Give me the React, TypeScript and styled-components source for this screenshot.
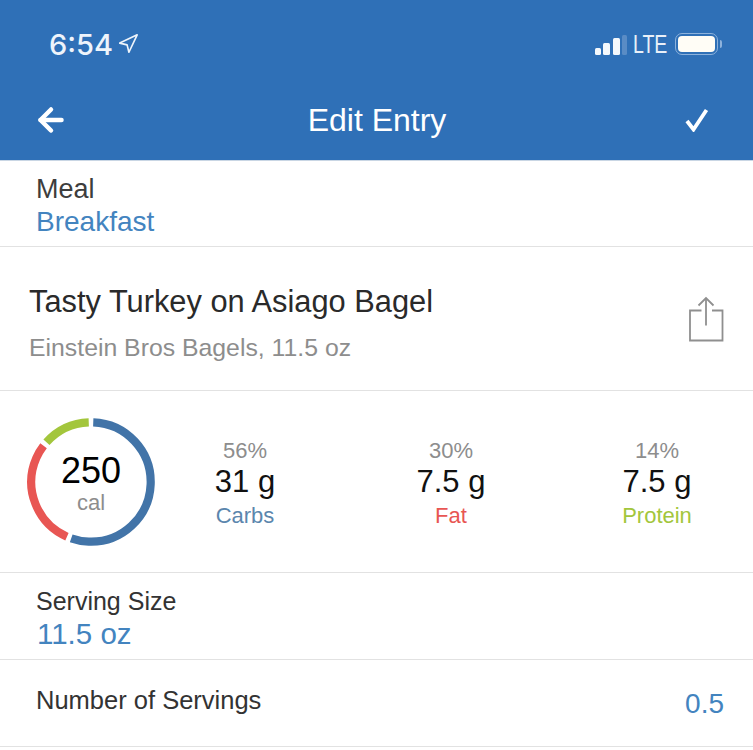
import { createGlobalStyle, styled } from "styled-components";
import { ArrowLeft, Navigation } from "lucide-react";

const GlobalStyle = createGlobalStyle`
  html, body {
    margin: 0;
    padding: 0;
    background: #fff;
    font-family: "Liberation Sans", Arial, sans-serif;
  }
`;

const macros = [
  { name: "Carbs", percent: 56, grams: "31 g", color: "#4274a8", labelColor: "#5b86ad" },
  { name: "Fat", percent: 30, grams: "7.5 g", color: "#e85653", labelColor: "#e85653" },
  { name: "Protein", percent: 14, grams: "7.5 g", color: "#a3c63c", labelColor: "#a3c63c" },
];

function CalorieRing() {
  let start = 0;
  return (
    <RingWrap>
      <svg width="128" height="128" viewBox="0 0 128 128">
        {macros.map((m) => {
          const from = start;
          start += m.percent;
          return (
            <circle
              key={m.name}
              cx="64"
              cy="64"
              r="59.7"
              fill="none"
              stroke={m.color}
              strokeWidth="8.2"
              pathLength={100}
              strokeDasharray={`${m.percent - 1.2} ${100 - m.percent + 1.2}`}
              transform={`rotate(${-90 + (from + 0.6) * 3.6} 64 64)`}
            />
          );
        })}
      </svg>
      <RingText>
        <Calories>250</Calories>
        <CalLabel>cal</CalLabel>
      </RingText>
    </RingWrap>
  );
}

export default function App() {
  return (
    <Page>
      <GlobalStyle />
      <Header>
        <StatusBar>
          <Clock>
            6:54
            <Navigation size={22} strokeWidth={1.8} />
          </Clock>
          <StatusRight>
            <Signal>
              <SignalBar $h={7} $w={6} />
              <SignalBar $h={12} $w={7} />
              <SignalBar $h={17} $w={7} />
              <SignalBar $h={20} $w={5} $dim />
            </Signal>
            <Lte>LTE</Lte>
            <Battery>
              <BatteryFill />
            </Battery>
            <BatteryCap />
          </StatusRight>
        </StatusBar>
        <NavBar>
          <ArrowLeft size={36} strokeWidth={3} />
          <NavTitle>Edit Entry</NavTitle>
          <svg width="24" height="24" viewBox="0 0 24 24" fill="none" stroke="#fff" strokeWidth="3.8">
            <path d="M2 13L8.5 21.5L21.5 2" />
          </svg>
        </NavBar>
      </Header>

      <MealRow>
        <RowLabel>Meal</RowLabel>
        <RowValue>Breakfast</RowValue>
      </MealRow>

      <FoodRow>
        <FoodText>
          <FoodName>Tasty Turkey on Asiago Bagel</FoodName>
          <FoodBrand>Einstein Bros Bagels, 11.5 oz</FoodBrand>
        </FoodText>
        <svg width="36" height="48" viewBox="0 0 36 48" fill="none" stroke="#8f8f8f" strokeWidth="1.8">
          <path d="M13.5 15.5H2V45.5H34.5V15.5H24" />
          <path d="M18 30.5V3" />
          <path d="M10.5 10.5L18 3L25.5 10.5" />
        </svg>
      </FoodRow>

      <MacroRow>
        <CalorieRing />
        <MacroList>
          {macros.map((m) => (
            <Macro key={m.name}>
              <Percent>{m.percent}%</Percent>
              <Grams>{m.grams}</Grams>
              <MacroName $color={m.labelColor}>{m.name}</MacroName>
            </Macro>
          ))}
        </MacroList>
      </MacroRow>

      <ServingRow>
        <ServingLabel>Serving Size</ServingLabel>
        <ServingValue>11.5 oz</ServingValue>
      </ServingRow>

      <InlineRow>
        <InlineLabel>Number of Servings</InlineLabel>
        <InlineValue>0.5</InlineValue>
      </InlineRow>
    </Page>
  );
}

// Styled components
const Page = styled.div`
  width: 753px;
  height: 750px;
  overflow: hidden;
  background: #fff;
`;

const Header = styled.header`
  height: 160px;
  background: #2f70b7;
  color: #fff;
  border-bottom: 1px solid #c9d6e4;
`;

const StatusBar = styled.div`
  height: 86px;
  padding: 2px 31px 0 49px;
  display: flex;
  justify-content: space-between;
  align-items: center;
  box-sizing: border-box;
`;

const Clock = styled.div`
  display: flex;
  align-items: center;
  gap: 4px;
  font-family: Inter, "Liberation Sans", sans-serif;
  font-weight: 500;
  font-size: 29px;
  color: #eef4fb;
`;

const StatusRight = styled.div`
  display: flex;
  align-items: center;
`;

const Signal = styled.div`
  display: flex;
  align-items: flex-end;
  gap: 2.5px;
  height: 21px;
  margin-right: 6px;
`;

const SignalBar = styled.span<{ $h: number; $w: number; $dim?: boolean }>`
  width: ${(p) => p.$w}px;
  height: ${(p) => p.$h}px;
  border-radius: 1.5px;
  background: ${(p) => (p.$dim ? "#5a8cc5" : "#f4f8fc")};
`;

const Lte = styled.span`
  font-size: 25px;
  transform: scaleX(0.78);
  transform-origin: left center;
  width: 35px;
  margin-right: 7px;
  color: #e9f0f9;
`;

const Battery = styled.div`
  width: 43px;
  height: 22px;
  box-sizing: border-box;
  border: 1.5px solid #8db2dc;
  border-radius: 7px;
  padding: 2px;
  display: flex;
`;

const BatteryFill = styled.div`
  flex: 1;
  background: #fffdf6;
  border-radius: 4px;
`;

const BatteryCap = styled.div`
  width: 2px;
  height: 8px;
  margin-left: 2px;
  background: #8db2dc;
  border-radius: 0 2px 2px 0;
`;

const NavBar = styled.div`
  height: 74px;
  padding: 0 44px 6px 33px;
  box-sizing: border-box;
  display: flex;
  justify-content: space-between;
  align-items: center;
`;

const NavTitle = styled.div`
  font-size: 32px;
  margin-left: 0;
`;

const MealRow = styled.section`
  height: 86px;
  padding: 11px 36px 0;
  box-sizing: border-box;
  border-bottom: 1px solid #e2e2e2;
`;

const ServingRow = styled(MealRow)`
  height: 87px;
  padding-top: 12px;
`;

const RowLabel = styled.div`
  font-size: 27px;
  line-height: 34px;
  color: #3d3d3d;
`;

const ServingLabel = styled.div`
  font-size: 25px;
  line-height: 33px;
  color: #333;
`;

const RowValue = styled.div`
  font-size: 28px;
  line-height: 32px;
  color: #4384bf;
`;

const ServingValue = styled(RowValue)`
  font-size: 29.5px;
  margin-left: 1px;
`;

const FoodRow = styled.section`
  height: 144px;
  padding: 0 29px;
  box-sizing: border-box;
  border-bottom: 1px solid #e2e2e2;
  display: flex;
  justify-content: space-between;
  align-items: center;
`;

const FoodText = styled.div`
  margin-top: 10px;
`;

const FoodName = styled.div`
  font-size: 30.8px;
  line-height: 34px;
  color: #2a2a2a;
  margin-bottom: 15px;
`;

const FoodBrand = styled.div`
  font-size: 24.8px;
  line-height: 28px;
  color: #8d8d8d;
`;

const MacroRow = styled.section`
  height: 182px;
  padding: 0 0 0 27px;
  box-sizing: border-box;
  border-bottom: 1px solid #e2e2e2;
  display: flex;
  align-items: center;
`;

const RingWrap = styled.div`
  position: relative;
  width: 128px;
  height: 128px;
`;

const RingText = styled.div`
  position: absolute;
  inset: 0;
  padding-top: 4px;
  box-sizing: border-box;
  display: flex;
  flex-direction: column;
  align-items: center;
  justify-content: center;
`;

const Calories = styled.div`
  font-size: 36px;
  line-height: 38px;
  color: #000;
`;

const CalLabel = styled.div`
  font-size: 22px;
  line-height: 26px;
  color: #8d8d8d;
`;

const MacroList = styled.div`
  flex: 1;
  display: grid;
  grid-template-columns: 206px 206px 1fr;
  padding: 0 0 0 12px;
`;

const Macro = styled.div`
  width: 156px;
  padding-top: 4px;
  display: flex;
  flex-direction: column;
  align-items: center;
`;

const Percent = styled.div`
  font-size: 22px;
  line-height: 26px;
  color: #8d8d8d;
`;

const Grams = styled.div`
  font-size: 31px;
  line-height: 36px;
  color: #111;
`;

const MacroName = styled.div<{ $color: string }>`
  font-size: 22px;
  line-height: 27px;
  margin-top: 2px;
  color: ${(p) => p.$color};
`;

const InlineRow = styled.section`
  height: 87px;
  padding: 0 29px 0 36px;
  box-sizing: border-box;
  border-bottom: 1px solid #e2e2e2;
  display: flex;
  justify-content: space-between;
  align-items: center;
`;

const InlineLabel = styled(ServingLabel)`
  font-size: 25.5px;
  margin-bottom: 6px;
`;

const InlineValue = styled(RowValue)`
  margin-top: 2px;
`;
